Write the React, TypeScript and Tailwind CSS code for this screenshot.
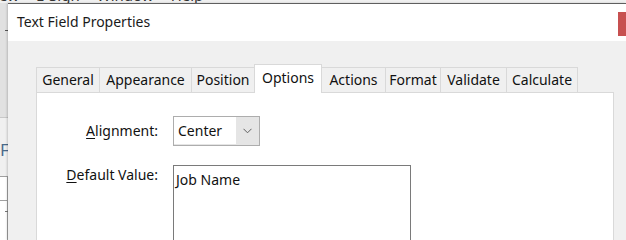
const font = "font-['Segoe_UI','Noto_Sans',sans-serif]";

const tabs = [
  { label: "General", w: "w-[64px]" },
  { label: "Appearance", w: "w-[93px]" },
  { label: "Position", w: "w-[64px]" },
  { label: "Options", w: "w-[68px]", active: true },
  { label: "Actions", w: "w-[65px]" },
  { label: "Format", w: "w-[56px]" },
  { label: "Validate", w: "w-[67px]" },
  { label: "Calculate", w: "w-[72px]" },
];

function Backdrop() {
  // the Acrobat window behind the dialog
  return (
    <div className="absolute inset-0 flex flex-col bg-[#f0f0f0]">
      <div className="relative h-[3px] shrink-0 overflow-visible">
        <div className="absolute left-[-1px] top-[-14px] flex gap-[17px] text-[15px] leading-[18px] text-[#333]">
          <span>ew</span>
          <span>E-Sign</span>
          <span>Window</span>
          <span>Help</span>
        </div>
      </div>
      <div className="flex w-[8px] flex-1 flex-col">
        <div className="relative h-[115px] shrink-0 border-b border-[#c8c8c8] bg-[#e1e1e1]">
          <div className="absolute left-[5px] top-[27px] h-px w-[3px] bg-[#555]" />
        </div>
        <div className="h-[58px] shrink-0 pt-[22px] text-[17px] leading-[20px] text-[#4a6a8a]">F</div>
        <div className="h-[25px] shrink-0 border-y border-r border-[#a0a0a0] bg-white" />
        <div className="relative flex-1 border-r border-[#a0a0a0] bg-white">
          <div className="absolute left-[5px] top-[10px] h-px w-[3px] bg-[#777]" />
        </div>
      </div>
    </div>
  );
}

function Combo() {
  return (
    <div className="flex h-[30px] w-[87px] border border-[#adadad] bg-[#e5e5e5]">
      <div className="mb-[1px] flex w-[62px] items-center bg-white pl-[4px] text-[14px] text-[#111]">
        Center
      </div>
      <div className="flex flex-1 items-center justify-center">
        <svg width="9" height="6" viewBox="0 0 9 6">
          <polyline points="0.5,0.8 4.5,4.8 8.5,0.8" fill="none" stroke="#606060" strokeWidth="1" />
        </svg>
      </div>
    </div>
  );
}

export default function App() {
  return (
    <div className={`relative h-[240px] w-[626px] overflow-hidden ${font}`}>
      <Backdrop />

      <div className="absolute bottom-0 left-[8px] right-0 top-[3px] flex flex-col overflow-hidden border-t border-[#5f5f5f] shadow-[-1px_0_2px_rgba(0,0,0,0.18)]">
        {/* title bar */}
        <div className="flex h-[37px] shrink-0 items-start justify-between bg-white">
          <div className="pl-[9px] pt-[8px] text-[14px] leading-[20px] text-[#1a1a1a]">
            Text Field Properties
          </div>
          <div className="mt-[8px] h-[24px] w-[8px] bg-[#c75050]" />
        </div>

        {/* body */}
        <div className="flex flex-1 flex-col bg-[#f0f0f0] pl-[28px] pr-[12px] pt-[23px]">
          <div className="flex h-[28px] shrink-0 items-end">
            {tabs.map((t, i) =>
              t.active ? (
                <div
                  key={t.label}
                  className={`relative z-10 -mb-px -ml-px flex h-[29px] ${t.w} items-start justify-center border border-b-0 border-[#d9d9d9] bg-white pt-[3px] text-[14px] leading-[20px] text-[#111]`}
                >
                  {t.label}
                </div>
              ) : (
                <div
                  key={t.label}
                  className={`flex h-[25px] ${t.w} ${i > 0 ? "-ml-px" : ""} items-center justify-center border border-b-0 border-[#d9d9d9] bg-[#f0f0f0] text-[14px] leading-[20px] text-[#111]`}
                >
                  {t.label}
                </div>
              )
            )}
          </div>

          <div className="flex-1 border border-[#d9d9d9] bg-white pt-[23px] text-[14px] leading-[20px] text-[#111]">
            <div className="flex items-center">
              <div className="w-[121px] text-right">
                <span className="underline underline-offset-2">A</span>lignment:
              </div>
              <div className="ml-[15px]">
                <Combo />
              </div>
            </div>

            <div className="mt-[19px] flex items-start">
              <div className="w-[121px] text-right">
                <span className="underline underline-offset-2">D</span>efault Value:
              </div>
              <div className="ml-[15px] h-[90px] w-[238px] border border-[#7a7a7a] pl-[2px] pt-[4px]">
                Job Name
              </div>
            </div>
          </div>
        </div>
      </div>
    </div>
  );
}
